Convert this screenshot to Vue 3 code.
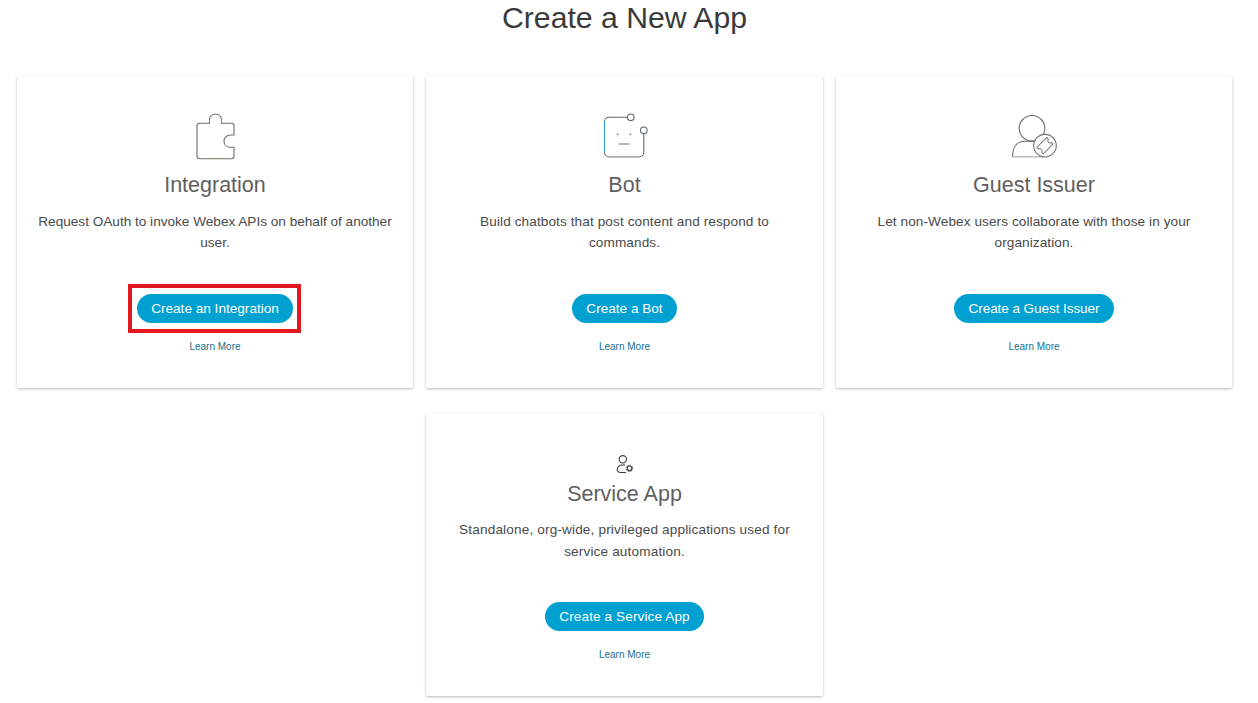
<template>
  <div class="page">
    <h1 class="page-title">Create a New App</h1>
    <div class="card-grid">
      <div
        v-for="card in cards"
        :key="card.id"
        class="card"
        :class="card.id"
      >
        <div class="card-icon">
          <svg v-if="card.id === 'integration'" width="48" height="52" viewBox="0 0 48 52" fill="none">
            <path d="M8.5 15.3H18.5C17.5 9.500 20 6 24.500 6C29 6 31.500 9.500 30.500 15.300H40.500C42 15.300 43 16.300 43 18V27H39.500C35.500 27 33 30 33 33C33 36.500 35.500 39.300 39.500 39.300H43V48C43 49.500 42 50.700 40.500 50.700H8.500C7 50.700 6 49.500 6 48V18C6 16.300 7 15.300 8.500 15.300Z" stroke="#6f6f63" stroke-width="1.1" />
          </svg>
          <svg v-else-if="card.id === 'bot'" width="48" height="52" viewBox="0 0 48 52" fill="none">
            <path d="M26.500 9.300H8C5.500 9.300 3.500 11.300 3.500 13.800V44.200C3.500 46.700 5.500 48.700 8 48.700H38.300C40.800 48.700 42.800 46.700 42.800 44.200V25.600" stroke="#5c6670" stroke-width="1.1" />
            <path d="M3.500 13.800V44.200" stroke="#3aa6dc" stroke-width="1.200" />
            <path d="M7 49H39" stroke="#b5b5b5" stroke-width="1.400" />
            <circle cx="29.800" cy="9.300" r="3.300" stroke="#5c6670" stroke-width="1.100" />
            <circle cx="42.800" cy="22.300" r="3.300" stroke="#5c6670" stroke-width="1.100" />
            <circle cx="16.500" cy="26.300" r="0.800" fill="#4c5560" />
            <circle cx="29.500" cy="26.300" r="0.800" fill="#4c5560" />
            <path d="M17.800 36H28.800" stroke="#77797c" stroke-width="1.100" />
          </svg>
          <svg v-else-if="card.id === 'guest'" width="48" height="52" viewBox="0 0 48 52" fill="none">
            <circle cx="22" cy="20.300" r="12.800" stroke="#6a6f78" stroke-width="1.100" />
            <path d="M2.500 48.700C2.500 39 7 33.300 15 33.300H26" stroke="#6a6f78" stroke-width="1.100" />
            <path d="M3 48.800H35" stroke="#b5b5b5" stroke-width="1.400" />
            <circle cx="35" cy="37.700" r="11.300" fill="#fff" stroke="#6a6f78" stroke-width="1.100" />
            <path transform="rotate(-45 35 37.700)" d="M28 33.200H42V35.500C40.700 35.500 40 36.500 40 37.700C40 38.900 40.700 39.900 42 39.900V42.200H28V39.900C29.300 39.900 30 38.900 30 37.700C30 36.500 29.300 35.500 28 35.500Z" stroke="#7b8088" stroke-width="1" />
          </svg>
          <svg v-else width="20" height="20" viewBox="0 0 20 20" fill="none">
            <circle cx="7.800" cy="4.300" r="3.700" stroke="#3c3c3c" stroke-width="1.100" />
            <path d="M10 10H7.500C4.500 10 2.500 12 2.200 14.300C2 16.300 3.500 17.500 5.500 17.500H11" stroke="#3c3c3c" stroke-width="1.100" />
            <circle cx="14.500" cy="13.300" r="2.300" stroke="#3c3c3c" stroke-width="1.100" />
            <circle cx="14.500" cy="13.300" r="3.200" stroke="#3c3c3c" stroke-width="0.900" stroke-dasharray="1.300 1.200" />
          </svg>
        </div>
        <h2 class="card-title">{{ card.title }}</h2>
        <p class="card-desc">{{ card.desc }}</p>
        <div class="card-action">
          <a class="create-btn">{{ card.action }}</a>
          <span v-if="card.id === 'integration'" class="highlight"></span>
        </div>
        <a class="learn-more">Learn More</a>
      </div>
    </div>
  </div>
</template>

<script setup>
const cards = [
  {
    id: 'integration',
    title: 'Integration',
    desc: 'Request OAuth to invoke Webex APIs on behalf of another user.',
    action: 'Create an Integration',
  },
  {
    id: 'bot',
    title: 'Bot',
    desc: 'Build chatbots that post content and respond to commands.',
    action: 'Create a Bot',
  },
  {
    id: 'guest',
    title: 'Guest Issuer',
    desc: 'Let non-Webex users collaborate with those in your organization.',
    action: 'Create a Guest Issuer',
  },
  {
    id: 'service',
    title: 'Service App',
    desc: 'Standalone, org-wide, privileged applications used for service automation.',
    action: 'Create a Service App',
  },
];
</script>

<style>
html,
body {
  background: #fff;
}
</style>

<style scoped>
.page {
  width: 1258px;
  height: 703px;
  overflow: hidden;
  box-sizing: border-box;
  padding: 0 26px 0 17px;
  font-family: "Liberation Sans", Arial, sans-serif;
  color: #4a4a4a;
}

.page-title {
  margin: 0 0 40px;
  height: 36px;
  line-height: 36px;
  text-align: center;
  font-size: 30.2px;
  font-weight: 400;
  color: #3a3a3a;
}

.card-grid {
  display: grid;
  grid-template-columns: 396px 397px 396px;
  column-gap: 13px;
  row-gap: 25px;
}

.card {
  box-sizing: border-box;
  height: 312px;
  padding: 32px 20px 0;
  display: flex;
  flex-direction: column;
  align-items: center;
  text-align: center;
  background: #fff;
  border-radius: 2px;
  box-shadow: 0 1px 3px rgba(0, 0, 0, 0.28);
}

.card.service {
  grid-column: 2;
  height: 283px;
}

.card-icon {
  height: 64px;
  display: flex;
  align-items: flex-start;
  justify-content: center;
}

.card.service .card-icon {
  height: 26px;
  padding-top: 10px;
}

.card-title {
  margin: 0;
  height: 26px;
  line-height: 26px;
  font-size: 21.5px;
  font-weight: 400;
  color: #5f5f5f;
}

.card-desc {
  margin: 13px 0 0;
  height: 63px;
  width: 356px;
  font-size: 13.6px;
  line-height: 21px;
  color: #4a4a4a;
}

.card.bot .card-desc {
  letter-spacing: 0.1px;
}

.card.guest .card-desc {
  letter-spacing: 0.08px;
}

.card.service .card-desc {
  margin-top: 12px;
  line-height: 22px;
  letter-spacing: 0.15px;
}

.card-action {
  position: relative;
  margin-top: 20px;
}

.create-btn {
  display: block;
  height: 29px;
  line-height: 29px;
  padding: 0 14.5px;
  border-radius: 15px;
  background: #00a0d1;
  color: #fff;
  font-size: 13.6px;
}

.card.guest .create-btn {
  letter-spacing: -0.1px;
}

.card.service .create-btn {
  letter-spacing: 0.1px;
}

.highlight {
  position: absolute;
  inset: -10px -8px -10px -9px;
  border: 4px solid #e3171f;
  pointer-events: none;
}

.learn-more {
  margin-top: 18px;
  font-size: 10px;
  line-height: 12px;
  color: #14708f;
}
</style>
